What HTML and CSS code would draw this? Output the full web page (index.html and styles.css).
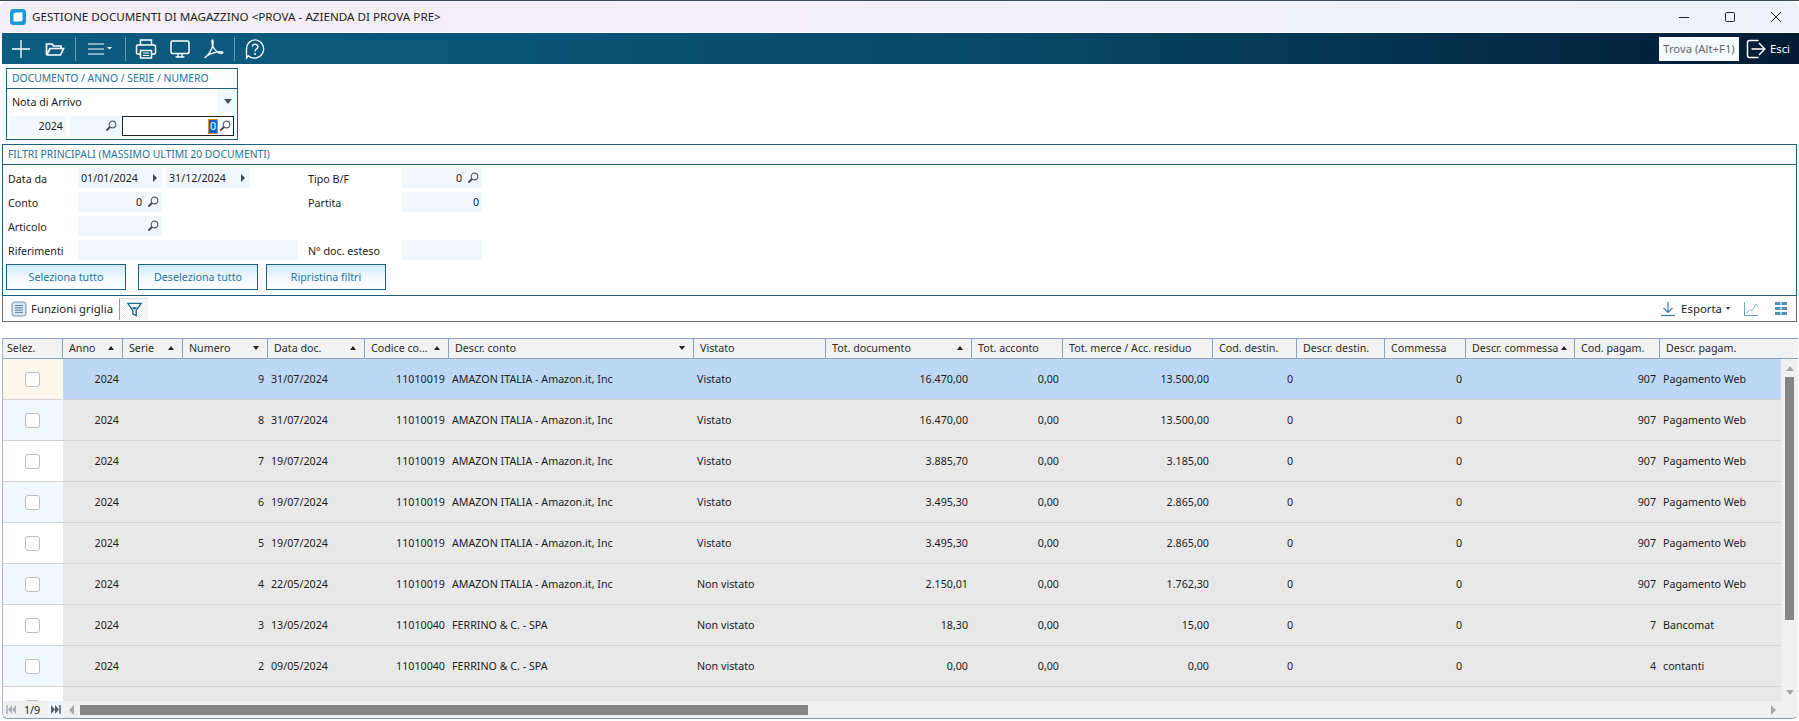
FILE: index.html
```html
<!DOCTYPE html>
<html lang="it">
<head>
<meta charset="utf-8">
<title>Gestione documenti di magazzino</title>
<link rel="stylesheet" href="styles.css">
</head>
<body>
<div class="window">
  <header class="titlebar">
    <svg class="app-icon" viewBox="0 0 16 16"><rect x="0" y="0" width="16" height="16" rx="3.5" fill="#1b9ad6"/><path d="M5.5 3.5H12.5V10.5Q12.5 12.5 10.5 12.5H3.5V5.5Q3.5 3.5 5.5 3.5Z" fill="#fff"/></svg>
    <span class="title">GESTIONE DOCUMENTI DI MAGAZZINO &lt;PROVA - AZIENDA DI PROVA PRE&gt;</span>
    <div class="win-controls">
      <svg viewBox="0 0 12 12"><path d="M1 6.5H11" stroke="#222" stroke-width="1" fill="none"/></svg>
      <svg viewBox="0 0 12 12"><rect x="1.5" y="1.5" width="9" height="9" rx="1.2" stroke="#222" fill="none"/></svg>
      <svg viewBox="0 0 12 12"><path d="M1 1L11 11M11 1L1 11" stroke="#222" fill="none"/></svg>
    </div>
  </header>

  <nav class="toolbar">
    <button class="tool"><svg width="20" height="20" viewBox="0 0 20 20"><path d="M10 1V19M1 10H19" stroke="#fff" stroke-width="1.3" fill="none"/></svg></button>
    <button class="tool"><svg width="20" height="20" viewBox="0 0 20 20"><path d="M1.5 16V5H7L8.5 7H16V9.5M1.5 16H15.5L18.500 9.500H5L2 15.500" stroke="#fff" stroke-width="1.700" fill="none"/></svg></button>
    <i class="tool-sep"></i>
    <button class="tool tool-menu"><svg width="28" height="20" viewBox="0 0 28 20"><path d="M3 5H19M3 10H19M3 15H19" stroke="#fff" stroke-width="1.2" fill="none"/><path d="M22 8H27L24.5 10.5Z" fill="#fff"/></svg></button>
    <i class="tool-sep"></i>
    <button class="tool"><svg width="22" height="22" viewBox="0 0 22 22"><path d="M5.5 7V2H16.5V7M5.5 16H2.5Q1.5 16 1.5 15V8.5Q1.5 7 3 7H19Q20.5 7 20.5 8.5V15Q20.5 16 19.500 16H16.500" stroke="#fff" stroke-width="1.500" fill="none"/><path d="M5.500 12.500H16.500V20H5.500Z" stroke="#fff" stroke-width="1.500" fill="none"/><path d="M8 15H14M8 17.500H14" stroke="#fff" fill="none"/></svg></button>
    <button class="tool"><svg width="22" height="22" viewBox="0 0 22 22"><rect x="2" y="3" width="18" height="12.500" rx="1.500" stroke="#fff" stroke-width="1.500" fill="none"/><path d="M9 15.500V18.500M13 15.500V18.500M6.500 19H15.500" stroke="#fff" stroke-width="1.300" fill="none"/></svg></button>
    <button class="tool"><svg width="22" height="22" viewBox="0 0 22 22"><path d="M2 19.500C5 18 8.500 12 9.800 7.500C10.500 4.500 10 2 9.500 2C8.800 2 8.500 5 10 8.500C11.500 12 15 15.500 18 15.500C20 15.500 20.500 14 19 13.800C15 13.300 8 15 4.500 17.500C2.500 19 1.500 20 2 19.500Z" stroke="#fff" stroke-width="1.300" fill="none"/></svg></button>
    <i class="tool-sep"></i>
    <button class="tool"><svg width="22" height="22" viewBox="0 0 22 22"><path d="M11 1.800A9.200 9.200 0 1 1 4.200 17.800L2.500 20V11A8.500 9.200 0 0 1 11 1.800Z" stroke="#fff" stroke-width="1.300" fill="none"/><path d="M8.300 8.500A2.800 2.600 0 1 1 12.500 11C11.500 11.700 11 12 11 13.500" stroke="#fff" stroke-width="1.400" fill="none"/><circle cx="11" cy="16" r="1" fill="#fff"/></svg></button>
    <div class="toolbar-right">
      <span class="find">Trova (Alt+F1)</span>
      <svg width="20" height="20" viewBox="0 0 20 20"><path d="M12.500 1.500H3.500Q1.500 1.500 1.500 3.500V16.500Q1.500 18.500 3.500 18.500H12.500" stroke="#fff" stroke-width="1.500" fill="none"/><path d="M5.500 10H18.500M13 4L18.800 10L13 16" stroke="#fff" stroke-width="1.400" fill="none"/></svg>
      <span class="exit">Esci</span>
    </div>
  </nav>

  <section class="doc-box">
    <h2 class="box-title">DOCUMENTO / ANNO / SERIE / NUMERO</h2>
    <div class="doc-type"><span>Nota di Arrivo</span><i class="combo-btn"><b class="caret-down"></b></i></div>
    <div class="doc-fields">
      <span class="field year">2024</span>
      <span class="field series"><svg class="lens" viewBox="0 0 12 12"><circle cx="7.500" cy="4.500" r="3.300" stroke="#5d6470" stroke-width="1.200" fill="none"/><path d="M5 7L1.300 10.700" stroke="#3b4048" stroke-width="1.800"/></svg></span>
      <span class="field number"><span class="sel">0</span><svg class="lens" viewBox="0 0 12 12"><circle cx="7.500" cy="4.500" r="3.300" stroke="#5d6470" stroke-width="1.200" fill="none"/><path d="M5 7L1.300 10.700" stroke="#3b4048" stroke-width="1.800"/></svg></span>
    </div>
  </section>

  <section class="filter-box">
    <h2 class="box-title">FILTRI PRINCIPALI (MASSIMO ULTIMI 20 DOCUMENTI)</h2>
    <div class="filter-grid">
      <label>Data da</label>
      <span class="field date">01/01/2024<b class="caret-right"></b></span>
      <i></i>
      <span class="field date">31/12/2024<b class="caret-right"></b></span>
      <i></i><i></i>
      <label>Tipo B/F</label>
      <span class="field right">0<svg class="lens" viewBox="0 0 12 12"><circle cx="7.500" cy="4.500" r="3.300" stroke="#5d6470" stroke-width="1.200" fill="none"/><path d="M5 7L1.300 10.700" stroke="#3b4048" stroke-width="1.800"/></svg></span>

      <label>Conto</label>
      <span class="field right">0<svg class="lens" viewBox="0 0 12 12"><circle cx="7.500" cy="4.500" r="3.300" stroke="#5d6470" stroke-width="1.200" fill="none"/><path d="M5 7L1.300 10.700" stroke="#3b4048" stroke-width="1.800"/></svg></span>
      <i></i><i></i><i></i><i></i>
      <label>Partita</label>
      <span class="field right">0</span>

      <label>Articolo</label>
      <span class="field right"><svg class="lens" viewBox="0 0 12 12"><circle cx="7.500" cy="4.500" r="3.300" stroke="#5d6470" stroke-width="1.200" fill="none"/><path d="M5 7L1.300 10.700" stroke="#3b4048" stroke-width="1.800"/></svg></span>
      <i></i><i></i><i></i><i></i><i></i><i></i>

      <label>Riferimenti</label>
      <span class="field span-ref"></span>
      <i></i>
      <label>N° doc. esteso</label>
      <span class="field"></span>
    </div>
    <div class="filter-actions">
      <button class="btn">Seleziona tutto</button>
      <button class="btn btn-gap">Deseleziona tutto</button>
      <button class="btn">Ripristina filtri</button>
    </div>
  </section>

  <div class="grid-tools">
    <svg class="ico-list" width="16" height="16" viewBox="0 0 16 16"><rect x="1" y="1" width="14" height="14" rx="2.500" fill="#d9e8f3" stroke="#6d93ad"/><path d="M4 4.500H12M4 6.800H12M4 9.100H12M4 11.400H12" stroke="#55809e"/></svg>
    <span class="tools-label">Funzioni griglia</span>
    <span class="filter-btn"><svg width="17" height="17" viewBox="0 0 18 18"><path d="M2 2.500H16L10.800 10V15.500L7.200 13.500V10Z" stroke="#1b6d8f" stroke-width="1.500" fill="#fff"/><path d="M6 6.500H12L10 9H8Z" fill="#1b6d8f"/></svg></span>
    <div class="tools-right">
      <svg width="16" height="16" viewBox="0 0 16 16"><path d="M8 1V11M3.500 7L8 11.500L12.500 7" stroke="#3d7ea6" stroke-width="1.200" fill="none"/><path d="M1 14.500H15" stroke="#3d7ea6" stroke-width="1.200"/></svg>
      <span class="export">Esporta</span><b class="caret-small"></b>
      <svg class="ico-chart" width="16" height="16" viewBox="0 0 16 16"><path d="M1.500 1V14.500H15" stroke="#6ba6c8" fill="none"/><path d="M3.500 12L7 8.500L9 10L13 3L15 6" stroke="#8cbcd6" fill="none"/></svg>
      <svg class="ico-cells" width="12" height="13" viewBox="0 0 12 13"><path d="M0 0H5.500V3H0ZM6.500 0H12V3H6.500ZM0 5H5.500V8H0ZM6.500 5H12V8H6.500ZM0 10H5.500V13H0ZM6.500 10H12V13H6.500Z" fill="#4e94b3"/></svg>
    </div>
  </div>

  <section class="grid">
    <div class="grid-head cols">
      <div class="hcell">Selez.</div>
      <div class="hcell">Anno<b class="sort-up"></b></div>
      <div class="hcell">Serie<b class="sort-up"></b></div>
      <div class="hcell">Numero<b class="sort-down"></b></div>
      <div class="hcell">Data doc.<b class="sort-up"></b></div>
      <div class="hcell">Codice co...<b class="sort-up"></b></div>
      <div class="hcell">Descr. conto<b class="sort-down"></b></div>
      <div class="hcell">Vistato</div>
      <div class="hcell">Tot. documento<b class="sort-up"></b></div>
      <div class="hcell">Tot. acconto</div>
      <div class="hcell">Tot. merce / Acc. residuo</div>
      <div class="hcell">Cod. destin.</div>
      <div class="hcell">Descr. destin.</div>
      <div class="hcell">Commessa</div>
      <div class="hcell">Descr. commessa<b class="sort-up tight"></b></div>
      <div class="hcell">Cod. pagam.</div>
      <div class="hcell">Descr. pagam.</div>
    </div>
    <div class="grid-body">
      <div class="row cols selected"><div class="sel-cell"><i class="check"></i></div><div class="r">2024</div><div></div><div class="r">9</div><div class="l">31/07/2024</div><div class="r">11010019</div><div class="l">AMAZON ITALIA - Amazon.it, Inc</div><div class="l">Vistato</div><div class="r">16.470,00</div><div class="r">0,00</div><div class="r">13.500,00</div><div class="r">0</div><div></div><div class="r">0</div><div></div><div class="r">907</div><div class="l">Pagamento Web</div></div>
      <div class="row cols alt"><div class="sel-cell"><i class="check"></i></div><div class="r">2024</div><div></div><div class="r">8</div><div class="l">31/07/2024</div><div class="r">11010019</div><div class="l">AMAZON ITALIA - Amazon.it, Inc</div><div class="l">Vistato</div><div class="r">16.470,00</div><div class="r">0,00</div><div class="r">13.500,00</div><div class="r">0</div><div></div><div class="r">0</div><div></div><div class="r">907</div><div class="l">Pagamento Web</div></div>
      <div class="row cols"><div class="sel-cell"><i class="check"></i></div><div class="r">2024</div><div></div><div class="r">7</div><div class="l">19/07/2024</div><div class="r">11010019</div><div class="l">AMAZON ITALIA - Amazon.it, Inc</div><div class="l">Vistato</div><div class="r">3.885,70</div><div class="r">0,00</div><div class="r">3.185,00</div><div class="r">0</div><div></div><div class="r">0</div><div></div><div class="r">907</div><div class="l">Pagamento Web</div></div>
      <div class="row cols alt"><div class="sel-cell"><i class="check"></i></div><div class="r">2024</div><div></div><div class="r">6</div><div class="l">19/07/2024</div><div class="r">11010019</div><div class="l">AMAZON ITALIA - Amazon.it, Inc</div><div class="l">Vistato</div><div class="r">3.495,30</div><div class="r">0,00</div><div class="r">2.865,00</div><div class="r">0</div><div></div><div class="r">0</div><div></div><div class="r">907</div><div class="l">Pagamento Web</div></div>
      <div class="row cols"><div class="sel-cell"><i class="check"></i></div><div class="r">2024</div><div></div><div class="r">5</div><div class="l">19/07/2024</div><div class="r">11010019</div><div class="l">AMAZON ITALIA - Amazon.it, Inc</div><div class="l">Vistato</div><div class="r">3.495,30</div><div class="r">0,00</div><div class="r">2.865,00</div><div class="r">0</div><div></div><div class="r">0</div><div></div><div class="r">907</div><div class="l">Pagamento Web</div></div>
      <div class="row cols alt"><div class="sel-cell"><i class="check"></i></div><div class="r">2024</div><div></div><div class="r">4</div><div class="l">22/05/2024</div><div class="r">11010019</div><div class="l">AMAZON ITALIA - Amazon.it, Inc</div><div class="l">Non vistato</div><div class="r">2.150,01</div><div class="r">0,00</div><div class="r">1.762,30</div><div class="r">0</div><div></div><div class="r">0</div><div></div><div class="r">907</div><div class="l">Pagamento Web</div></div>
      <div class="row cols"><div class="sel-cell"><i class="check"></i></div><div class="r">2024</div><div></div><div class="r">3</div><div class="l">13/05/2024</div><div class="r">11010040</div><div class="l">FERRINO &amp; C. - SPA</div><div class="l">Non vistato</div><div class="r">18,30</div><div class="r">0,00</div><div class="r">15,00</div><div class="r">0</div><div></div><div class="r">0</div><div></div><div class="r">7</div><div class="l">Bancomat</div></div>
      <div class="row cols alt"><div class="sel-cell"><i class="check"></i></div><div class="r">2024</div><div></div><div class="r">2</div><div class="l">09/05/2024</div><div class="r">11010040</div><div class="l">FERRINO &amp; C. - SPA</div><div class="l">Non vistato</div><div class="r">0,00</div><div class="r">0,00</div><div class="r">0,00</div><div class="r">0</div><div></div><div class="r">0</div><div></div><div class="r">4</div><div class="l">contanti</div></div>
      <div class="row cols"><div class="sel-cell"><i class="check"></i></div></div>
      <div class="vscroll"><b class="arrow-up"></b><i class="vthumb"></i><b class="arrow-down"></b></div>
    </div>
    <div class="hscroll">
      <svg class="pager" width="10" height="9" viewBox="0 0 10 9"><path d="M1 0V9" stroke="#aab0b6" stroke-width="1.500"/><path d="M6 0V9L2 4.500ZM10 0V9L6 4.500Z" fill="#aab0b6"/></svg>
      <span class="page-num">1/9</span>
      <span class="pager-next"><svg width="10" height="9" viewBox="0 0 10 9"><path d="M9 0V9" stroke="#54606c" stroke-width="1.500"/><path d="M4 0V9L8 4.500ZM0 0V9L4 4.500Z" fill="#54606c"/></svg></span>
      <b class="arrow-left"></b>
      <div class="htrack"><i class="hthumb"></i></div>
      <b class="arrow-right"></b>
    </div>
  </section>
</div>
</body>
</html>
```
FILE: styles.css
```css
* { box-sizing: border-box; }
html, body { margin: 0; height: 100%; background: #fff; overflow: hidden; }
body { font-family: "Noto Sans", "Liberation Sans", sans-serif; font-size: 10.7px; color: #1c1c1c; }
button { font: inherit; }
h2 { margin: 0; font-weight: 400; }
i, b { display: block; font-style: normal; }

.window { width: 1799px; height: 721px; display: flex; flex-direction: column; background: #fff; border-top: 1px solid #3a4a58; }

/* title bar */
.titlebar { height: 31px; flex: none; display: flex; align-items: center; padding-left: 10px; background: linear-gradient(90deg, #f4eef6, #f3eff6 35%, #eef1f9); border-radius: 8px 8px 0 0; }
.app-icon { width: 16px; height: 16px; flex: none; }
.title { margin-left: 6px; font-size: 11.67px; color: #222; }
.win-controls { margin-left: auto; display: flex; gap: 34px; padding-right: 17px; }
.win-controls svg { width: 12px; height: 12px; }

/* toolbar */
.toolbar { height: 31px; flex: none; margin: 1px 0 0 2px; display: flex; align-items: center; padding-left: 2px; background: linear-gradient(90deg, #0c5c80 0, #0a5678 28%, #074562 60%, #04304c 80%, #031b33 100%); }
.tool { width: 34px; height: 31px; padding: 0; border: 0; background: none; display: flex; align-items: center; justify-content: center; }
.tool-menu { width: 40px; margin-right: 3px; }
.tool-sep { width: 1px; height: 24px; margin: 0 3px; background: #6d98ad; }
.toolbar-right { margin-left: auto; display: flex; align-items: center; padding-right: 9px; color: #fff; }
.find { width: 80px; height: 24px; line-height: 24px; background: #f4f9fd; color: #666; text-align: center; font-size: 11.3px; margin-right: 7px; }
.exit { margin-left: 4px; font-size: 11.3px; }

/* document box */
.doc-box { width: 232px; height: 72px; flex: none; margin: 4px 0 0 6px; border: 1px solid #1d5f80; }
.box-title { height: 20px; line-height: 19px; padding-left: 5px; border-bottom: 1px solid #1d5f80; font-size: 10.35px; color: #24749c; }
.doc-type { height: 23px; display: flex; align-items: center; justify-content: space-between; padding-left: 5px; }
.doc-type span { padding-top: 2px; }
.combo-btn { width: 19px; height: 23px; padding-top: 2px; background: #f0f8fd; display: flex; align-items: center; justify-content: center; }
.doc-fields { display: flex; margin: 4px 0 0 3px; }
.field { height: 20px; background: #f0f8fd; display: flex; align-items: center; justify-content: flex-end; padding: 0 3px; }
.year { width: 56px; }
.series { width: 52px; margin-left: 4px; padding-right: 5px; }
.number { width: 112px; background: #fff; border: 1px solid #222; padding-right: 2px; }
.sel { background: #0a64c8; color: #fff; margin-right: -3px; line-height: 13px; padding: 0 1px; outline: 1px solid #e58a1f; }
.lens { width: 12px; height: 12px; margin-left: 5px; flex: none; }

.caret-down { width: 0; height: 0; border: 4px solid transparent; border-top: 5px solid #465160; border-bottom: 0; }
.caret-right { width: 0; height: 0; border: 4px solid transparent; border-left: 4px solid #3d4650; border-right: 0; margin-left: auto; margin-right: 2px; }
.caret-small { width: 0; height: 0; border: 2.5px solid transparent; border-top: 3px solid #333; border-bottom: 0; margin-left: 4px; }

/* filter box */
.filter-box { height: 152px; flex: none; margin: 4px 2px 0 2px; border: 1px solid #1d5f80; }
.filter-box .box-title { padding-left: 5px; height: 20px; }
.filter-grid { display: grid; grid-template-columns: 70px 84px 4px 84px 48px 10px 94px 80px; grid-auto-rows: 20px; row-gap: 4px; padding: 3px 0 0 5px; }
.filter-grid label { line-height: 22px; }
.date { justify-content: flex-start; padding-left: 3px; }
.right { padding-right: 3px; }
.span-ref { grid-column: 2 / span 4; }
.filter-actions { display: flex; gap: 12px; margin: 4px 0 0 3px; }
.btn { width: 120px; height: 26px; padding: 0; border: 1px solid #1d5f80; background: linear-gradient(180deg, #cfe9f9, #f4fafe 55%, #fff); color: #24749c; font-size: 10.7px; }
.btn-gap { margin-right: -4px; }

/* grid toolbar */
.grid-tools { height: 26px; flex: none; margin: 0 2px 0 2px; display: flex; align-items: center; padding-left: 8px; border: 1px solid #6a6f74; border-top: 0; }
.tools-label { margin-left: 4px; font-size: 11.4px; color: #222; }
.filter-btn { width: 29px; height: 22px; margin-left: 6px; display: flex; align-items: center; justify-content: center; border-left: 1px solid #999; border-top: 1px solid #ddd; background: repeating-conic-gradient(#eceef0 0 25%, #fff 0 50%) 0 0 / 2px 2px; }
.tools-right { margin-left: auto; display: flex; align-items: center; padding-right: 9px; }
.export { margin-left: 5px; font-size: 11.4px; }
.ico-chart { margin-left: 13px; }
.ico-cells { margin-left: 16px; }

/* data grid */
.grid { flex: 1; min-height: 0; margin: 16px 1px 2px 2px; display: flex; flex-direction: column; border-bottom: 1px solid #8a9aab; border-left: 1px solid #a9b6c2; border-radius: 0 0 6px 6px; overflow: hidden; }
.cols { display: grid; grid-template-columns: 60px 60px 60px 85px 97px 84px 245px 132px 146px 91px 150px 84px 88px 81px 109px 85px 1fr; }
.grid-head { height: 21px; flex: none; background: #f2f2f2; border-top: 1px solid #8ba3bd; border-bottom: 1px solid #8ba3bd; }
.hcell { display: flex; align-items: center; justify-content: space-between; padding: 0 8px 1px 6px; border-right: 1px solid #8ba3bd; white-space: nowrap; color: #2a2a2a; }
.hcell:first-child { padding-left: 4px; }
.hcell:last-child { border-right: 0; }
.sort-up { width: 0; height: 0; border: 3.5px solid transparent; border-bottom: 4px solid #222; border-top: 0; }
.sort-down { width: 0; height: 0; border: 3.500px solid transparent; border-top: 4px solid #222; border-bottom: 0; }
.tight { margin-right: -1px; }

.grid-body { flex: 1; min-height: 0; position: relative; overflow: hidden; padding-right: 17px; }
.row { height: 41px; background: #e8e8e8; border-bottom: 1px solid #d2d2d2; align-items: center; white-space: nowrap; }
.row > .r { text-align: right; padding: 0 4px 1px 0; }
.row > .l { padding: 0 0 1px 3px; }
.sel-cell { align-self: stretch; background: #fff; display: flex; align-items: center; justify-content: center; padding-right: 2px; }
.alt .sel-cell { background: #f0f8fd; }
.selected { background: #bcd8f5; }
.selected .sel-cell { background: #fdf7ec; }
.check { width: 15px; height: 15px; background: #fdfdfd; border: 1px solid #bcbcbc; border-radius: 3px; }

.vscroll { position: absolute; top: 0; right: 0; bottom: 0; width: 17px; background: #f0f0f0; display: flex; flex-direction: column; align-items: center; padding: 7px 0 6px; }
.arrow-up { width: 0; height: 0; border: 4.500px solid transparent; border-bottom: 5px solid #a8a8a8; border-top: 0; }
.arrow-down { width: 0; height: 0; border: 4.500px solid transparent; border-top: 5px solid #a8a8a8; border-bottom: 0; margin-top: auto; }
.vthumb { width: 9px; height: 243px; margin-top: 6px; background: #858585; }

.hscroll { height: 17px; flex: none; display: flex; align-items: center; background: #f0f0f0; padding-left: 3px; position: relative; }
.page-num { margin-left: 8px; width: 24px; }
.pager-next { width: 16px; height: 17px; background: #eaf5fc; display: flex; align-items: center; justify-content: center; }
.arrow-left { width: 0; height: 0; border: 5px solid transparent; border-right: 5px solid #a8a8a8; border-left: 0; margin-left: 5px; }
.htrack { flex: 1; margin-left: 6px; }
.hthumb { width: 728px; height: 10px; background: #858585; }
.arrow-right { width: 0; height: 0; border: 5px solid transparent; border-left: 5px solid #a8a8a8; border-right: 0; margin-right: 22px; }
```
